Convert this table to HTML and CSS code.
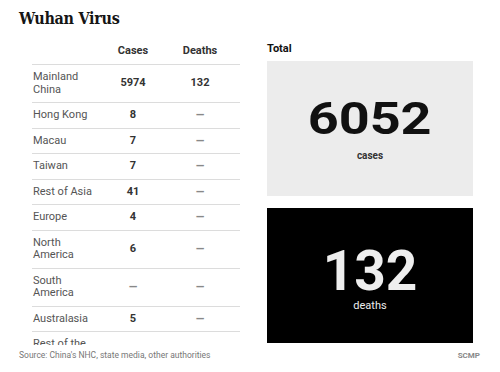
FILE: index.html
```html
<!DOCTYPE html>
<html lang="en">
<head>
<meta charset="utf-8">
<title>Wuhan Virus</title>
<link rel="stylesheet" href="styles.css">
</head>
<body>
<div class="page">
  <h1 class="title">Wuhan Virus</h1>
  <div class="main">
    <div class="table-wrap">
      <div class="row head">
        <div class="c-name"></div>
        <div class="c-num">Cases</div>
        <div class="c-num">Deaths</div>
      </div>
      <div class="row">
        <div class="c-name">Mainland<br>China</div>
        <div class="c-num">5974</div>
        <div class="c-num">132</div>
      </div>
      <div class="row">
        <div class="c-name">Hong Kong</div>
        <div class="c-num">8</div>
        <div class="c-num dash">–</div>
      </div>
      <div class="row">
        <div class="c-name">Macau</div>
        <div class="c-num">7</div>
        <div class="c-num dash">–</div>
      </div>
      <div class="row">
        <div class="c-name">Taiwan</div>
        <div class="c-num">7</div>
        <div class="c-num dash">–</div>
      </div>
      <div class="row">
        <div class="c-name">Rest of Asia</div>
        <div class="c-num">41</div>
        <div class="c-num dash">–</div>
      </div>
      <div class="row">
        <div class="c-name">Europe</div>
        <div class="c-num">4</div>
        <div class="c-num dash">–</div>
      </div>
      <div class="row">
        <div class="c-name">North<br>America</div>
        <div class="c-num">6</div>
        <div class="c-num dash">–</div>
      </div>
      <div class="row">
        <div class="c-name">South<br>America</div>
        <div class="c-num dash">–</div>
        <div class="c-num dash">–</div>
      </div>
      <div class="row">
        <div class="c-name">Australasia</div>
        <div class="c-num">5</div>
        <div class="c-num dash">–</div>
      </div>
      <div class="row">
        <div class="c-name">Rest of the<br>world</div>
        <div class="c-num">5</div>
        <div class="c-num dash">–</div>
      </div>
    </div>
    <div class="totals">
      <div class="totals-label">Total</div>
      <div class="box box-cases">
        <div class="big big-cases">6052</div>
        <div class="box-label label-cases">cases</div>
      </div>
      <div class="box box-deaths">
        <div class="big big-deaths">132</div>
        <div class="box-label label-deaths">deaths</div>
      </div>
    </div>
  </div>
  <div class="footer">
    <div class="source">Source: China's NHC, state media, other authorities</div>
    <div class="brand">SCMP</div>
  </div>
</div>
</body>
</html>
```

FILE: styles.css
```css
html, body {
  margin: 0;
  padding: 0;
  background: #ffffff;
}

.page {
  width: 500px;
  height: 372px;
  padding: 0 0 0 19px;
  box-sizing: border-box;
  font-family: Roboto, "Liberation Sans", sans-serif;
  overflow: hidden;
}

.title {
  margin: 0;
  padding-top: 8px;
  height: 39px;
  box-sizing: border-box;
  font-family: "DejaVu Serif Condensed", "DejaVu Serif", serif;
  font-stretch: condensed;
  font-weight: 700;
  font-size: 16px;
  letter-spacing: -0.3px;
  line-height: 22px;
  color: #151515;
}

.main {
  display: flex;
  gap: 27px;
}

.table-wrap {
  margin-left: 13px;
  width: 208px;
  height: 306px;
  overflow: hidden;
}

.row {
  display: grid;
  grid-template-columns: 68px 66px 68px;
  align-items: center;
  padding: 6px 0;
  border-bottom: 1px solid #dcdcdc;
  font-size: 11px;
  line-height: 12.5px;
}

.row.head {
  height: 26px;
  box-sizing: border-box;
  padding: 0;
  font-weight: 700;
  color: #333;
}

.c-name {
  padding-left: 1px;
  color: #555;
}

.c-num {
  text-align: center;
  font-weight: 700;
  color: #333;
}

.c-num.dash {
  font-size: 15px;
  line-height: 12.5px;
  font-weight: 500;
  color: #888;
}

.totals {
  width: 206px;
  padding-top: 3px;
}

.totals-label {
  font-size: 11px;
  font-weight: 700;
  line-height: 14px;
  color: #111;
  margin-bottom: 5px;
}

.box {
  height: 135px;
  box-sizing: border-box;
  display: flex;
  flex-direction: column;
  align-items: center;
  justify-content: center;
}

.box-cases {
  background: #ececec;
  margin-bottom: 12px;
}

.box-deaths {
  background: #000;
  padding-top: 4px;
}

.big {
  font-weight: 700;
  line-height: 1;
}

.big-cases {
  font-size: 45px;
  color: #111;
  transform: scaleX(1.2);
}

.big-deaths {
  font-size: 55px;
  color: #eeeeee;
}

.box-label {
  font-size: 10px;
  line-height: 12px;
}

.label-cases {
  font-weight: 700;
  color: #333;
  margin-top: 9px;
}

.label-deaths {
  color: #eee;
  font-size: 11px;
  margin-top: 1px;
}

.footer {
  display: flex;
  justify-content: space-between;
  align-items: center;
  padding-top: 5px;
  padding-right: 20px;
}

.source {
  font-size: 8.5px;
  color: #777;
}

.brand {
  font-size: 8px;
  font-weight: 700;
  color: #888;
}
```
